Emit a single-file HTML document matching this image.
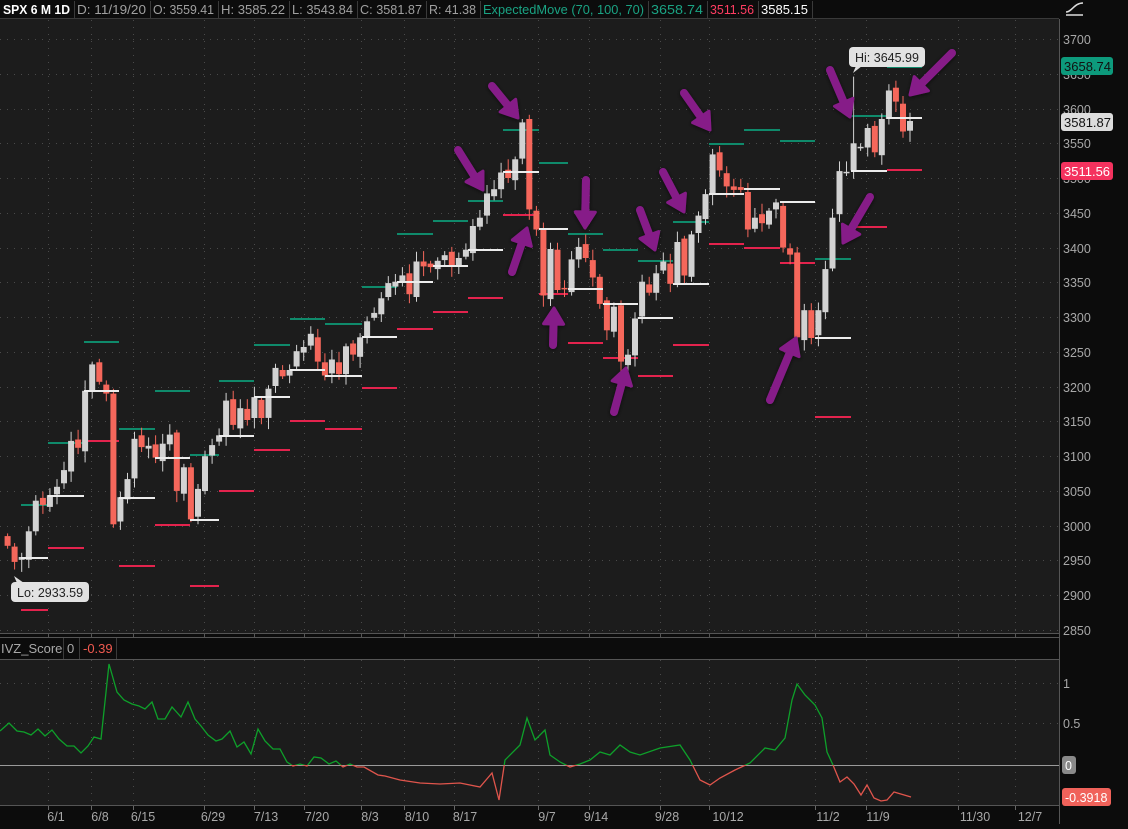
<!DOCTYPE html>
<html><head><meta charset="utf-8">
<style>
html,body{margin:0;padding:0;background:#0c0c0c;}
body{width:1128px;height:824px;overflow:hidden;font-family:"Liberation Sans",sans-serif;}
svg text{font-family:"Liberation Sans",sans-serif;}
</style></head>
<body>
<svg id="s" width="1128" height="824" xmlns="http://www.w3.org/2000/svg"></svg>
<script>
var S=document.getElementById('s');var h='';
function Y(p){return 39+(3700-p)*0.6953;}
h+='<rect x="0" y="0" width="1128" height="824" fill="#0c0c0c"/>';
h+='<rect x="0" y="19" width="1059" height="614" fill="#1c1c1c"/>';
h+='<rect x="0" y="659" width="1059" height="146" fill="#1c1c1c"/>';
var hd=[["SPX 6 M 1D",0,74,"#ffffff",true],["D: 11/19/20",74,150,"#a0a0a0"],["O: 3559.41",150,218,"#a0a0a0"],["H: 3585.22",218,289,"#a0a0a0"],["L: 3543.84",289,357,"#a0a0a0"],["C: 3581.87",357,426,"#a0a0a0"],["R: 41.38",426,480,"#a0a0a0"],["ExpectedMove (70, 100, 70)",480,648,"#1aa383"],["3658.74",648,707,"#1aa383"],["3511.56",707,758,"#ff3d62"],["3585.15",758,812,"#ffffff"]];
hd.forEach(function(c,i){
 if(i>0)h+='<line x1="'+(c[1]+0.5)+'" y1="1" x2="'+(c[1]+0.5)+'" y2="18" stroke="#3a3a3a"/>';
 h+='<text x="'+(c[1]+3)+'" y="14" font-size="13" fill="'+c[3]+'"'+(c[4]?' font-weight="bold"':'')+' textLength="'+(c[2]-c[1]-7)+'" lengthAdjust="spacingAndGlyphs">'+c[0]+'</text>';
});
h+='<line x1="812.5" y1="1" x2="812.5" y2="18" stroke="#3a3a3a"/>';
h+='<line x1="0" y1="18.5" x2="1059" y2="18.5" stroke="#3a3a3a"/>';
h+='<path d="M1066 15 L1083 15 M1066 12 C1072 12 1074 3 1083 3" stroke="#ddd" stroke-width="1.5" fill="none"/>';
var dl=[[56,"6/1"],[100,"6/8"],[143,"6/15"],[213,"6/29"],[266,"7/13"],[317,"7/20"],[370,"8/3"],[417,"8/10"],[465,"8/17"],[547,"9/7"],[596,"9/14"],[667,"9/28"],[728,"10/12"],[828,"11/2"],[878,"11/9"],[975,"11/30"],[1030,"12/7"]];
var gx=[48,91,133,204,254,304,361,404,454,538,589,660,709,815,866,958,1015];
gx.forEach(function(x){h+='<line x1="'+x+'.5" y1="20" x2="'+x+'.5" y2="632" stroke="#4a4a4a" stroke-dasharray="1,6"/>';h+='<line x1="'+x+'.5" y1="660" x2="'+x+'.5" y2="804" stroke="#4a4a4a" stroke-dasharray="1,6"/>';h+='<line x1="'+x+'.5" y1="805" x2="'+x+'.5" y2="810" stroke="#666"/><line x1="'+x+'.5" y1="633" x2="'+x+'.5" y2="637" stroke="#555"/>';});
for(var p=3700;p>=2850;p-=50){var y=Math.round(Y(p));h+='<line x1="0" y1="'+y+'.5" x2="1058" y2="'+y+'.5" stroke="#4a4a4a" stroke-dasharray="1,6"/>';h+='<text x="1063" y="'+(y+5)+'" font-size="12.5" fill="#a8a8a8">'+p+'</text>';}
[683,723].forEach(function(y){h+='<line x1="0" y1="'+y+'.5" x2="1058" y2="'+y+'.5" stroke="#4a4a4a" stroke-dasharray="1,6"/>';});
var G=[[21,48,505],[48,84,443],[84,119,342],[119,155,429],[155,190,391],[190,219,455],[219,254,381],[254,290,345],[290,325,319],[325,362,324],[362,397,287],[397,433,234],[433,468,221],[468,503,201],[503,539,130],[539,568,163],[568,603,234],[603,638,250],[638,673,261],[673,709,222],[709,744,144],[744,780,130],[780,815,141],[815,851,259],[851,887,116],[887,922,67]];
var W=[[21,48,558],[48,84,496],[84,119,391],[119,155,498],[155,190,458],[190,219,520],[219,254,436],[254,290,397],[290,325,370],[325,362,376],[362,397,337],[397,433,282],[433,468,266],[468,503,250],[503,539,172],[539,568,229],[568,603,289],[603,638,304],[638,673,318],[673,709,284],[709,744,194],[744,780,189],[780,815,202],[815,851,338],[851,887,171],[887,922,118]];
var R=[[21,48,610],[48,84,548],[84,119,441],[119,155,566],[155,190,525],[190,219,586],[219,254,491],[254,290,450],[290,325,421],[325,362,429],[362,397,388],[397,433,329],[433,468,312],[468,503,298],[503,539,215],[539,568,294],[568,603,343],[603,638,358],[638,673,376],[673,709,345],[709,744,244],[744,780,248],[780,815,263],[815,851,417],[851,887,227],[887,922,170]];
function seg(a,c){a.forEach(function(s){h+='<rect x="'+s[0]+'" y="'+(s[2]-1)+'" width="'+(s[1]-s[0])+'" height="2" fill="'+c+'"/>';});}
seg(G,"#0f8a6b");seg(R,"#e3234d");
var C=[2971,2948,2955,2992,3036,3030,3044,3056,3080,3122,3112,3194,3232,3207,3190,3002,3041,3067,3125,3113,3115,3098,3118,3131,3050,3084,3009,3053,3100,3116,3130,3180,3145,3169,3152,3185,3155,3197,3227,3215,3224,3251,3257,3276,3236,3216,3239,3218,3258,3246,3271,3294,3306,3327,3349,3351,3360,3333,3380,3373,3372,3381,3389,3374,3385,3397,3431,3443,3478,3484,3508,3500,3527,3580,3455,3426,3331,3398,3339,3340,3383,3401,3385,3357,3319,3281,3315,3236,3246,3298,3351,3335,3363,3380,3348,3408,3360,3419,3446,3477,3534,3511,3488,3483,3483,3426,3443,3435,3453,3465,3400,3390,3271,3310,3270,3310,3369,3443,3510,3509,3550,3545,3572,3537,3585,3626,3610,3567,3582];
var n=C.length;
for(var i=0;i<n;i++){
 var x=910-(n-1-i)*7.05;var c=C[i];var o=i?C[i-1]+((i*37)%11-5):2985;
 var up=c>=o;var col=up?"#d2d2d2":"#f5675b";
 var hi=Math.max(o,c)+4+(i*13)%12,lo=Math.min(o,c)-4-(i*7)%13;
 if(i==n-9)hi=3645.99; if(i==2)lo=2933.59;
 h+='<line x1="'+x.toFixed(1)+'" y1="'+Y(hi).toFixed(1)+'" x2="'+x.toFixed(1)+'" y2="'+Y(lo).toFixed(1)+'" stroke="'+col+'" stroke-width="1"/>';
 var t=Y(Math.max(o,c)),b=Y(Math.min(o,c));if(b-t<1.5)b=t+1.5;
 h+='<rect x="'+(x-3).toFixed(1)+'" y="'+t.toFixed(1)+'" width="6" height="'+(b-t).toFixed(1)+'" fill="'+col+'"/>';
}
seg(W,"#ececec");
h+='<path d="M856 66 L853 73 L862 66Z" fill="#e0e0e0"/><rect x="849" y="47" width="76" height="20" rx="4" fill="#e2e2e2"/><text x="855" y="62" font-size="12.5" fill="#222">Hi: 3645.99</text>';
h+='<path d="M17 583 L14 576 L24 583Z" fill="#e0e0e0"/><rect x="11" y="582" width="78" height="20" rx="4" fill="#e2e2e2"/><text x="17" y="597" font-size="12.5" fill="#222">Lo: 2933.59</text>';
var A=[[492,86,518,118],[458,150,483,190],[512,272,527,228],[553,345,554,308],[586,180,585,228],[614,412,626,368],[640,210,655,250],[663,172,684,212],[684,93,710,130],[770,400,796,338],[830,70,850,117],[870,197,843,243],[952,53,910,95]];
A.forEach(function(a){var dx=a[2]-a[0],dy=a[3]-a[1],L=Math.sqrt(dx*dx+dy*dy),ux=dx/L,uy=dy/L,px=-uy,py=ux;
 var bx=a[2]-ux*16,by=a[3]-uy*16;
 h+='<g filter="url(#sh)"><line x1="'+a[0]+'" y1="'+a[1]+'" x2="'+bx+'" y2="'+by+'" stroke="#861f88" stroke-width="8" stroke-linecap="round"/>';
 h+='<path d="M'+a[2]+' '+a[3]+' L'+(bx+px*10)+' '+(by+py*10)+' L'+(bx-px*10)+' '+(by-py*10)+'Z" fill="#861f88" stroke="#861f88" stroke-width="3" stroke-linejoin="round"/></g>';});
h+='<line x1="1059.5" y1="19" x2="1059.5" y2="824" stroke="#555"/>';
h+='<rect x="1061" y="57" width="52" height="18" rx="3" fill="#0d9a7c"/><text x="1064" y="71" font-size="13" fill="#111">3658.74</text>';
h+='<rect x="1061" y="113" width="52" height="18" rx="3" fill="#dcdcdc"/><text x="1064" y="127" font-size="13" fill="#111">3581.87</text>';
h+='<rect x="1061" y="162" width="52" height="18" rx="3" fill="#f4325e"/><text x="1064" y="176" font-size="13" fill="#fff">3511.56</text>';
h+='<line x1="0" y1="633.5" x2="1059" y2="633.5" stroke="#555"/><line x1="0" y1="637.5" x2="1059" y2="637.5" stroke="#555"/><line x1="0" y1="659.5" x2="1059" y2="659.5" stroke="#555"/>';
h+='<text x="1" y="653" font-size="13" fill="#a8a8a8">IVZ_Score</text><line x1="63.5" y1="638" x2="63.5" y2="659" stroke="#3a3a3a"/><text x="67" y="653" font-size="13" fill="#a8a8a8">0</text><line x1="79.5" y1="638" x2="79.5" y2="659" stroke="#3a3a3a"/><text x="83" y="653" font-size="13" fill="#f05a50">-0.39</text><line x1="116.5" y1="638" x2="116.5" y2="659" stroke="#3a3a3a"/>';
h+='<line x1="0" y1="765.5" x2="1059" y2="765.5" stroke="#9a9a9a"/><line x1="0" y1="805.5" x2="1059" y2="805.5" stroke="#555"/>';
h+='<text x="1063" y="688" font-size="12.5" fill="#a8a8a8">1</text><text x="1063" y="728" font-size="12.5" fill="#a8a8a8">0.5</text>';
h+='<rect x="1062" y="756" width="14" height="18" rx="3" fill="#8a8a8a"/><text x="1065" y="770" font-size="12.5" fill="#fff">0</text>';
h+='<rect x="1062" y="788" width="49" height="18" rx="3" fill="#f0625a"/><text x="1065" y="802" font-size="12.5" fill="#fff">-0.3918</text>';
var P=[[0,731],[9,723],[17,731],[24,732],[31,735],[38,729],[45,736],[52,730],[59,739],[67,746],[74,746],[81,753],[88,746],[94,737],[101,739],[109,664],[117,692],[124,700],[132,704],[139,706],[145,709],[152,702],[158,719],[165,719],[172,707],[181,717],[188,702],[195,719],[201,726],[208,735],[216,741],[222,739],[230,731],[237,747],[244,742],[251,754],[258,729],[265,741],[273,749],[280,749],[287,762],[293,766],[300,764],[307,766],[314,757],[321,758],[329,764],[336,761],[343,767],[350,764],[357,767],[364,767],[378,775],[385,776],[400,780],[420,783],[440,784],[460,783],[480,787],[492,773],[499,800],[505,760],[520,745],[527,718],[535,740],[545,730],[550,755],[560,762],[570,767],[580,764],[590,760],[600,752],[610,755],[620,745],[630,752],[640,755],[660,748],[680,745],[690,760],[700,780],[710,785],[720,778],[735,770],[750,763],[765,748],[775,750],[785,738],[792,700],[797,684],[805,695],[815,705],[822,718],[827,752],[833,765],[840,782],[847,777],[854,784],[861,795],[867,785],[874,798],[881,801],[887,800],[894,792],[911,797]];
var pts=P.map(function(q){return q.join(',');}).join(' ');
h+='<defs><clipPath id="cu"><rect x="0" y="659" width="1059" height="106"/></clipPath><clipPath id="cd"><rect x="0" y="765" width="1059" height="40"/></clipPath><filter id="sh" x="-50%" y="-50%" width="200%" height="200%"><feDropShadow dx="0" dy="1" stdDeviation="2" flood-color="#000" flood-opacity="0.6"/></filter></defs>';
h+='<polyline points="'+pts+'" fill="none" stroke="#0ea02a" stroke-width="1.3" clip-path="url(#cu)"/>';
h+='<polyline points="'+pts+'" fill="none" stroke="#e0554c" stroke-width="1.3" clip-path="url(#cd)"/>';
dl.forEach(function(d){h+='<text x="'+d[0]+'" y="821" font-size="12.5" fill="#a8a8a8" text-anchor="middle">'+d[1]+'</text>';});
S.innerHTML=h;
</script>
</body></html>
